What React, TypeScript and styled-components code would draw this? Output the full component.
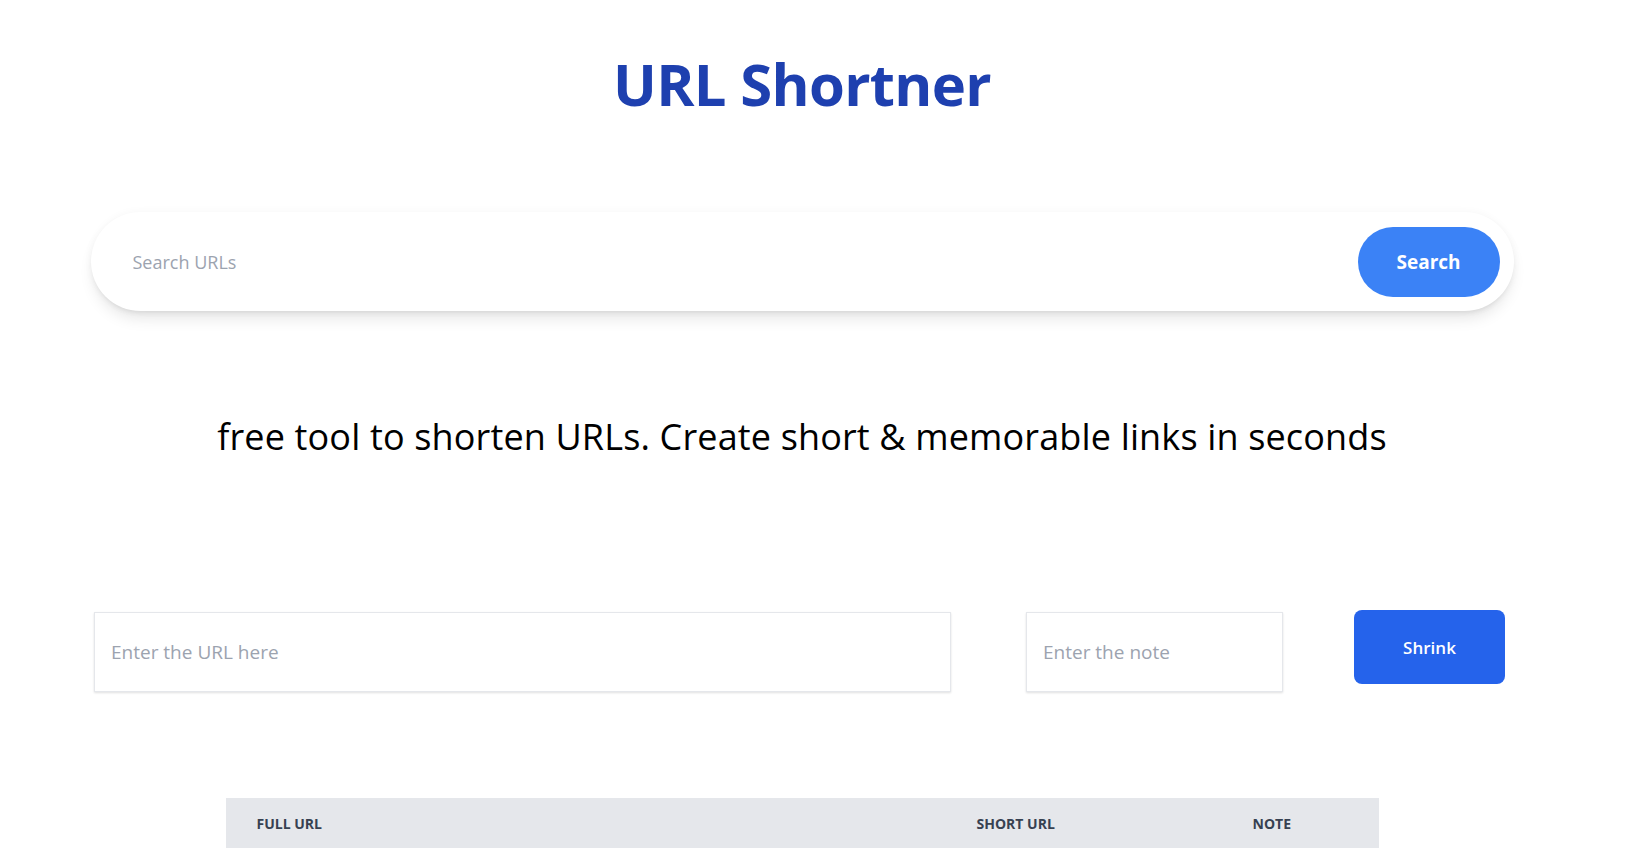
import React from "react";
import styled, { createGlobalStyle } from "styled-components";

const Global = createGlobalStyle`
  html, body { margin: 0; padding: 0; background: #ffffff; }
  body { font-family: "Open Sans", "Noto Sans", Arial, sans-serif; color: #111827; }
  * { box-sizing: border-box; }
`;

const Page = styled.div`
  width: 1604px;
  display: flex;
  flex-direction: column;
  align-items: center;
`;

const Title = styled.h1`
  margin: 54px 0 0;
  font-size: 58px;
  line-height: 60px;
  font-weight: 700;
  color: #1e40af;
  letter-spacing: -0.7px;
`;

const SearchBar = styled.form`
  margin-top: 98px;
  width: 1423px;
  height: 99px;
  border-radius: 50px;
  background: #fff;
  box-shadow: 0 10px 15px -3px rgba(0,0,0,0.1), 0 4px 6px -4px rgba(0,0,0,0.1), 0 0 8px rgba(0,0,0,0.04);
  display: flex;
  align-items: center;
  padding: 0 14px 0 40px;
`;

const SearchInput = styled.input`
  flex: 1;
  border: none;
  outline: none;
  background: transparent;
  font-family: inherit;
  font-size: 18px;
  color: #111827;
  &::placeholder { color: #9ca3af; }
`;

const PillButton = styled.button`
  width: 142px;
  height: 70px;
  border: none;
  border-radius: 35px;
  background: #3b82f6;
  color: #fff;
  font-family: inherit;
  font-size: 19px;
  font-weight: 700;
  cursor: pointer;
`;

const Tagline = styled.h2`
  margin: 106px 0 0;
  font-size: 36px;
  line-height: 40px;
  font-weight: 500;
  color: #000;
  letter-spacing: 0.15px;
`;

const FormRow = styled.div`
  align-self: flex-start;
  margin: 153px 0 0 94px;
  display: flex;
  align-items: flex-start;
`;

const Field = styled.input<{ $w: number; $gap: number }>`
  width: ${(p) => p.$w}px;
  height: 80px;
  margin-top: 2px;
  margin-right: ${(p) => p.$gap}px;
  border: 1px solid #e5e7eb;
  box-shadow: 0 1px 2px rgba(0,0,0,0.12);
  padding: 0 16px;
  font-family: inherit;
  font-size: 19px;
  outline: none;
  color: #111827;
  &::placeholder { color: #9ca3af; }
`;

const ShrinkButton = styled.button`
  width: 151px;
  height: 74px;
  border: none;
  border-radius: 8px;
  background: #2563eb;
  color: #fff;
  font-family: inherit;
  font-size: 17px;
  font-weight: 600;
  cursor: pointer;
`;

const TableHead = styled.div`
  margin-top: 106px;
  width: 1153px;
  height: 50px;
  background: #e5e7eb;
  display: grid;
  grid-template-columns: 720px 276px 1fr;
  align-items: center;
`;

const HeadCell = styled.div`
  padding-left: 31px;
  font-size: 14px;
  font-weight: 700;
  color: #374151;
  text-transform: uppercase;
`;

export default function App() {
  return (
    <>
      <Global />
      <Page>
        <Title>URL Shortner</Title>
        <SearchBar onSubmit={(e) => e.preventDefault()}>
          <SearchInput placeholder="Search URLs" />
          <PillButton type="submit">Search</PillButton>
        </SearchBar>
        <Tagline>free tool to shorten URLs. Create short &amp; memorable links in seconds</Tagline>
        <FormRow>
          <Field $w={857} $gap={75} placeholder="Enter the URL here" />
          <Field $w={257} $gap={71} placeholder="Enter the note" />
          <ShrinkButton>Shrink</ShrinkButton>
        </FormRow>
        <TableHead>
          <HeadCell>Full URL</HeadCell>
          <HeadCell>Short URL</HeadCell>
          <HeadCell>Note</HeadCell>
        </TableHead>
      </Page>
    </>
  );
}
